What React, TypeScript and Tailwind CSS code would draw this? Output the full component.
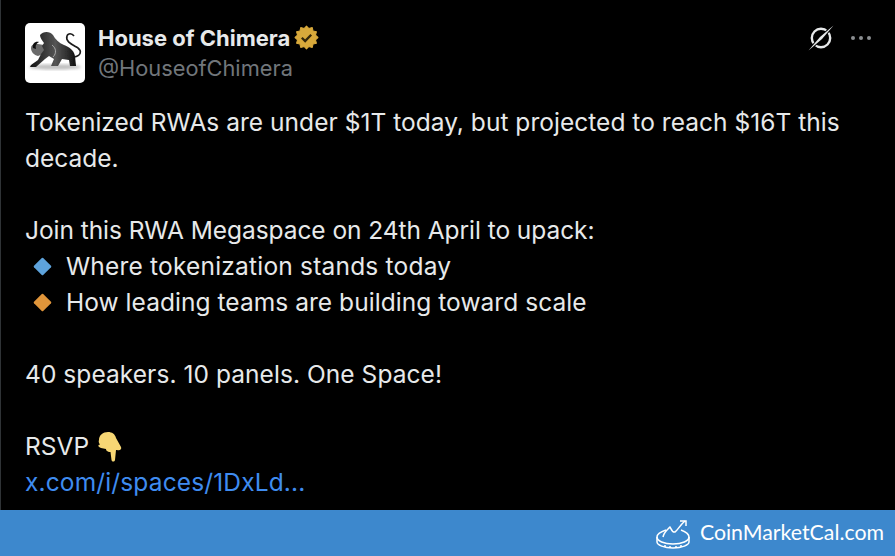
const badgePoints = Array.from({ length: 24 }, (_, i) => {
  const r = i % 2 === 0 ? 11 : 8.9;
  const a = (i * Math.PI) / 12;
  return `${(12 + r * Math.sin(a)).toFixed(2)},${(12 - r * Math.cos(a)).toFixed(2)}`;
}).join(" ");

export default function App() {
  return (
    <div className="w-[895px] h-[556px] flex flex-col bg-black overflow-hidden font-['Inter',sans-serif]">
      <div className="flex-1 border-l border-[#2f3336] pl-[24px] pr-[24px] pt-[23px]">
        <div className="flex items-start">
          <div className="w-[60px] h-[60px] rounded-[5px] bg-white flex items-center justify-center">
            <svg width="60" height="60" viewBox="0 0 60 60">
              <defs>
                <filter id="soft">
                  <feGaussianBlur stdDeviation="0.45" />
                </filter>
                <filter id="shadow">
                  <feGaussianBlur stdDeviation="1.4" />
                </filter>
                <linearGradient id="body" x1="0" y1="0" x2="1" y2="0">
                  <stop offset="0" stopColor="#111" />
                  <stop offset="0.55" stopColor="#555" />
                  <stop offset="1" stopColor="#111" />
                </linearGradient>
              </defs>
              <ellipse cx="30" cy="44" rx="26" ry="2.6" fill="#bdbdbd" filter="url(#shadow)" />
              <g filter="url(#soft)">
                <path
                  d="M13 21 C9 20 6 22 6 25 C6 29 9 32 13 33 L20 30 L19 22 Z"
                  fill="#6a6a6a"
                />
                <path
                  d="M8 25 C7 21 10 18 14 19 C12 20 10 22 11 26 Z"
                  fill="#111"
                />
                <path
                  d="M15 12 C18 8 25 8 28 12 C30 16 34 20 39 22 C44 24 49 27 50 33 L51 43 L45 43 L44 37 L37 36 L33 43 L26 43 L29 36 L24 33 L20 36 L11 44 L5 44 L6 42 L13 37 L16 31 L19 27 L17 23 L19 20 C17 17 15 15 15 12 Z"
                  fill="url(#body)"
                />
                <path d="M27 22 C31 25 32 30 28 34" fill="none" stroke="#bbb" strokeWidth="0.8" />
                <path
                  d="M49 34 C56 33 57 28 53 25 C48 22 40 19 42 13 C43 10 47 10 49 13"
                  fill="none"
                  stroke="#1a1a1a"
                  strokeWidth="1.6"
                />
              </g>
            </svg>
          </div>
          <div className="ml-[13px] flex-1">
            <div className="flex items-center h-[30px]">
              <span className="text-[22px] font-bold text-[#e7e9ea] leading-[30px]">House of Chimera</span>
              <svg className="ml-[4px] -mt-[1px]" width="25" height="25" viewBox="0 0 24 24">
                <polygon points={badgePoints} fill="#d8a93b" stroke="#d8a93b" strokeWidth="1" strokeLinejoin="round" />
                <path d="M7.5 12.3l3.2 3.2 5.8-6.2" fill="none" stroke="#33270b" strokeWidth="2.2" />
              </svg>
            </div>
            <div className="text-[21.8px] text-[#71767b] leading-[30px]">@HouseofChimera</div>
          </div>
          <div className="flex items-center h-[30px]">
            <svg width="30" height="30" viewBox="0 0 30 30">
              <circle cx="15" cy="15" r="9.2" fill="none" stroke="#e7e9ea" strokeWidth="2.4" />
              <path d="M3 27 L16 13.5 L27 3 L14 16.5 Z" fill="#000" stroke="#000" strokeWidth="3" />
              <path d="M2.5 27.5 L14 14 L27.5 2.5 L16 16 Z" fill="#e7e9ea" />
            </svg>
            <div className="ml-[15px] flex gap-[4px]">
              <span className="w-[4px] h-[4px] rounded-full bg-[#8b8e91]" />
              <span className="w-[4px] h-[4px] rounded-full bg-[#8b8e91]" />
              <span className="w-[4px] h-[4px] rounded-full bg-[#8b8e91]" />
            </div>
          </div>
        </div>
        <div className="mt-[21px] text-[24.5px] leading-[36px] text-[#e7e9ea]">
          <p className="tracking-[0.03px]">Tokenized RWAs are under $1T today, but projected to reach $16T this</p>
          <p>decade.</p>
          <p className="mt-[36px] tracking-[-0.06px]">Join this RWA Megaspace on 24th April to upack:</p>
          <div className="flex items-center">
            <span className="ml-[11px] w-[13px] h-[13px] rotate-45 rounded-[1px] bg-[#5ea3dc]" />
            <span className="ml-[17px] tracking-[0.2px]">Where tokenization stands today</span>
          </div>
          <div className="flex items-center">
            <span className="ml-[11px] w-[13px] h-[13px] rotate-45 rounded-[1px] bg-[#e0953a]" />
            <span className="ml-[17px] tracking-[0.05px]">How leading teams are building toward scale</span>
          </div>
          <p className="mt-[36px] tracking-[0.06px]">40 speakers. 10 panels. One Space!</p>
          <div className="mt-[36px] flex items-center h-[36px]">
            <span>RSVP</span>
            <svg className="ml-[8px]" width="26" height="31" viewBox="0 0 26 31">
              <path
                d="M2 9 C2 4 6 1 11 1 C15 1 18 3 19 7 L24 16 C25 18 23 20 20 19 L19 19 L18 29 C17.5 31 15 31 14.5 29 L13.5 21 C10 21 9 19 9 18 L4 17 C1 16 0.5 14 3 13.5 C1.5 12 1.5 10 2 9 Z"
                fill="#f7d774"
              />
            </svg>
          </div>
          <p className="text-[#3f8cf0] tracking-[0.14px]">x.com/i/spaces/1DxLd...</p>
        </div>
      </div>
      <div className="h-[46px] bg-[#3d88cd] flex items-center justify-end pr-[11px]">
        <svg width="34" height="30" viewBox="0 0 34 30" fill="none" stroke="#fff" strokeWidth="1.5" className="mt-[1px]">
          <path d="M10 11 C4 13 1 15 1 18 C1 22 8 25 17 25 C26 25 33 22 33 18 C33 15 30 13 25 11" />
          <path d="M1 18 V23 C1 26 8 29 17 29 C26 29 33 26 33 23 V18" />
          <path d="M7 18 C8 13 11 11 14 8 C15 9 16 14 19 13 C21 12 24 6 29 2" />
          <path d="M24 2 H30 V7" />
          <path d="M9 26 V28 M14 27 V29 M20 27 V29 M25 26 V28" />
        </svg>
        <span className="ml-[10px] font-['Lato',sans-serif] text-[21.3px] text-white">CoinMarketCal.com</span>
      </div>
    </div>
  );
}
